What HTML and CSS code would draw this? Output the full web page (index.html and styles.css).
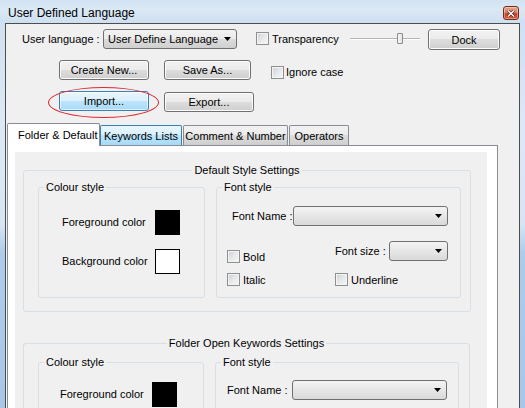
FILE: index.html
```html
<!DOCTYPE html>
<html>
<head>
<meta charset="utf-8">
<link rel="stylesheet" href="styles.css">
</head>
<body>
<div class="window">
  <div class="titlebar">
    <span class="title">User Defined Language</span>
    <div class="close"><svg width="8" height="7" viewBox="0 0 8 7"><path d="M1 0.5L7 6.5M7 0.5L1 6.5" stroke="#4a1a10" stroke-width="2.6"/><path d="M1 0.5L7 6.5M7 0.5L1 6.5" stroke="#fff" stroke-width="1.4"/></svg></div>
  </div>
  <div class="client">
    <div class="row row1">
      <span class="lbl lbl-lang">User language :</span>
      <div class="combo combo-lang"><span class="combo-text">User Define Language</span><svg class="arrow" width="7" height="4" viewBox="0 0 7 4"><path d="M0 0h7L3.5 4z"/></svg></div>
      <span class="check check-trans"></span><span class="lbl lbl-trans">Transparency</span>
      <div class="slider"><div class="thumb"></div></div>
      <div class="btn btn-dock">Dock</div>
    </div>
    <div class="row row2">
      <div class="btn btn-create">Create New...</div>
      <div class="btn btn-save">Save As...</div>
      <span class="check check-ignore"></span><span class="lbl lbl-ignore">Ignore case</span>
    </div>
    <div class="row row3">
      <div class="btn-wrap">
        <div class="btn btn-hover btn-import">Import...</div>
        <div class="ring"></div>
      </div>
      <div class="btn btn-export">Export...</div>
    </div>
    <div class="tabs">
      <div class="tab tab-active t1">Folder &amp; Default</div>
      <div class="tab tab-hover t2">Keywords Lists</div>
      <div class="tab t3">Comment &amp; Number</div>
      <div class="tab t4">Operators</div>
    </div>
    <div class="panel">
      <div class="page">
        <div class="group g1">
          <div class="group-title"><span>Default Style Settings</span></div>
          <div class="cols">
            <div class="sub sub-colour">
              <div class="sub-title"><span>Colour style</span></div>
              <div class="swrow swrow1"><span class="swlbl">Foreground color</span><span class="swatch black"></span></div>
              <div class="swrow swrow2"><span class="swlbl">Background color</span><span class="swatch white"></span></div>
            </div>
            <div class="sub sub-font">
              <div class="sub-title"><span>Font style</span></div>
              <div class="fname"><span class="fname-lbl">Font Name :</span><div class="combo combo-font"><svg class="arrow" width="7" height="4" viewBox="0 0 7 4"><path d="M0 0h7L3.5 4z"/></svg></div></div>
              <div class="frow frow-a">
                <div class="cell-left cell-bottom"><span class="check"></span><span class="clbl">Bold</span></div>
                <div class="cell-right"><span class="fsize-lbl">Font size :</span><div class="combo combo-size"><svg class="arrow" width="7" height="4" viewBox="0 0 7 4"><path d="M0 0h7L3.5 4z"/></svg></div></div>
              </div>
              <div class="frow frow-b">
                <div class="cell-left"><span class="check"></span><span class="clbl">Italic</span></div>
                <div class="cell-right cell-under"><span class="check"></span><span class="clbl">Underline</span></div>
              </div>
            </div>
          </div>
        </div>
        <div class="group g2">
          <div class="group-title"><span>Folder Open Keywords Settings</span></div>
          <div class="cols">
            <div class="sub sub-colour">
              <div class="sub-title"><span>Colour style</span></div>
              <div class="swrow swrow1"><span class="swlbl">Foreground color</span><span class="swatch black"></span></div>
            </div>
            <div class="sub sub-font">
              <div class="sub-title"><span>Font style</span></div>
              <div class="fname"><span class="fname-lbl">Font Name :</span><div class="combo combo-font"><svg class="arrow" width="7" height="4" viewBox="0 0 7 4"><path d="M0 0h7L3.5 4z"/></svg></div></div>
            </div>
          </div>
        </div>
      </div>
    </div>
  </div>
</div>
</body>
</html>
```
FILE: styles.css
```css
* { box-sizing: border-box; }
html, body { margin: 0; padding: 0; }
body {
  width: 525px; height: 408px; overflow: hidden;
  font-family: "Liberation Sans", Arial, sans-serif;
  font-size: 11px; color: #000;
}
.window {
  width: 525px; height: 408px;
  display: flex; flex-direction: column;
  background: linear-gradient(to bottom, #cddff1 0, #dce8f5 30%, #d7e5f3 55%, #aecbea 62%, #a8c7e8 100%);
}
.titlebar {
  height: 23px; flex: none;
  display: flex; align-items: center;
  padding-left: 8px;
  background: linear-gradient(to bottom, #d3e3f3 0, #dbe8f5 40%, #cddff0 100%);
}
.title { font-size: 12px; color: #000; padding-top: 2px; }
.close {
  margin-left: auto; margin-right: 6px; margin-top: 3px;
  width: 16px; height: 14px;
  border: 1px solid #7a2a1c; border-radius: 3px;
  background: linear-gradient(to bottom, #e9a690 0, #d8826a 45%, #c2442a 55%, #d3603c 100%);
  display: flex; align-items: center; justify-content: center;
  box-shadow: inset 0 0 0 1px rgba(255,255,255,0.35);
}
.client {
  flex: 1; margin: 0 5px 0 5px;
  border: 1px solid #4d4d4d; border-bottom: none;
  background: #f0f0f0;
  padding-top: 4px;
  overflow: hidden;
}
.row { display: flex; align-items: center; }
.row1 { height: 21px; }
.lbl { white-space: nowrap; }
.lbl-lang { margin-left: 16px; width: 81px; }
.combo {
  height: 20px; display: flex; align-items: center;
  border: 1px solid #707070; border-radius: 3px;
  background: linear-gradient(to bottom, #f2f2f2 0, #ebebeb 49%, #dddddd 50%, #cfcfcf 100%);
  padding-left: 4px; padding-right: 5px;
}
.combo-text { flex: 1; white-space: nowrap; }
.combo .arrow { margin-left: auto; fill: #000; }
.combo-lang { width: 134px; }
.check {
  display: inline-block; width: 13px; height: 13px; flex: none;
  border: 1px solid #8e8f8f;
  background: linear-gradient(135deg, #cbcfd5 0, #e6e8ea 50%, #f6f6f6 100%);
  box-shadow: inset 0 0 0 1px #f4f4f4;
}
.check-trans { margin-left: 19px; }
.lbl-trans { margin-left: 3px; width: 78px; }
.slider {
  width: 70px; height: 12px; display: flex; align-items: center;
  background:
    linear-gradient(#b5b5b5, #b5b5b5) 0 5px / 100% 1px no-repeat,
    linear-gradient(#ffffff, #ffffff) 0 6px / 100% 1px no-repeat;
}
.thumb {
  margin-left: 47px; width: 6px; height: 11px;
  border: 1px solid #8a8a8a; border-radius: 1px;
  background: linear-gradient(to right, #f7f7f7, #e2e2e2);
}
.btn {
  height: 20px; display: flex; align-items: center; justify-content: center;
  border: 1px solid #707070; border-radius: 3px;
  background: linear-gradient(to bottom, #f2f2f2 0, #ebebeb 49%, #dddddd 50%, #cfcfcf 100%);
  box-shadow: inset 0 0 0 1px #fcfcfc;
  white-space: nowrap;
}
.btn-dock { margin-left: 8px; width: 72px; height: 21px; margin-top: 2px; }
.row2 { margin-top: 11px; }
.btn-create { margin-left: 53px; width: 90px; }
.btn-save { margin-left: 15px; width: 87px; }
.check-ignore { margin-left: 20px; margin-top: 4px; }
.lbl-ignore { margin-left: 2px; margin-top: 4px; }
.row3 { margin-top: 11px; align-items: flex-start; }
.btn-wrap { position: relative; margin-left: 53px; }
.btn-import { width: 90px; }
.btn-hover {
  border-color: #3c7fb1;
  background: linear-gradient(to bottom, #eaf6fd 0, #d9f0fc 49%, #bee6fd 50%, #a7d9f5 100%);
  box-shadow: inset 0 0 0 1px rgba(255,255,255,0.6);
}
.ring {
  position: absolute; left: -11px; top: -4px; width: 111px; height: 31px;
  border: 1px solid #e0282f; border-radius: 50%;
}
.btn-export { margin-left: 15px; width: 90px; margin-top: 1px; }
.tabs {
  display: flex; align-items: flex-end;
  margin-top: 11px; margin-left: 1px; height: 22px;
  position: relative; z-index: 1;
}
.tab {
  height: 20px; display: flex; align-items: center; justify-content: center;
  border: 1px solid #898c95; border-bottom: none;
  border-radius: 2px 2px 0 0;
  background: linear-gradient(to bottom, #f2f2f2 0, #ebebeb 49%, #dddddd 50%, #cfcfcf 100%);
  white-space: nowrap;
}
.tab-active {
  height: 23px; margin-bottom: -1px; background: #fff;
  justify-content: flex-start; padding-left: 10px; padding-bottom: 1px;
}
.tab-hover {
  border-color: #3c7fb1;
  background: linear-gradient(to bottom, #eaf6fd 0, #d9f0fc 49%, #bee6fd 50%, #a7d9f5 100%);
}
.t1 { width: 93px; }
.t2 { width: 82px; }
.t3 { width: 105px; margin-left: 1px; }
.t4 { width: 60px; margin-left: 1px; }
.panel {
  margin-left: 1px; width: 491px; height: 300px;
  border: 1px solid #898c95; border-bottom: none;
  background: #fff;
  padding: 6px 0 0 7px;
}
.page {
  width: 472px; height: 300px; background: #f0f0f0;
  padding-top: 18px;
}
.group {
  margin: 0 16px 0 8px;
  border: 1px solid #d5dfe5; border-radius: 3px;
  padding-bottom: 13px;
}
.g2 { margin-top: 31px; margin-right: 17px; }
.group-title {
  display: flex; justify-content: center;
  margin-top: -7px; height: 13px; line-height: 13px;
}
.group-title span, .sub-title span { background: #f0f0f0; padding: 0 2px; }
.cols { display: flex; gap: 11px; margin: 10px 0 0 14px; }
.g2 .cols { margin-top: 12px; }
.sub {
  border: 1px solid #d5dfe5; border-radius: 3px; height: 111px;
}
.sub-colour { width: 167px; }
.sub-font { width: 245px; }
.g2 .sub-colour { width: 166px; }
.g2 .sub-font { width: 244px; }
.sub-title {
  display: flex; margin-top: -7px; height: 13px; line-height: 13px; padding-left: 5px;
}
.swrow { display: flex; align-items: center; padding-left: 23px; }
.swrow1 { margin-top: 16px; }
.swrow2 { margin-top: 14px; }
.g2 .swrow { padding-left: 21px; }
.g2 .swrow1 { margin-top: 13px; }
.swlbl { width: 93px; white-space: nowrap; padding-bottom: 2px; }
.g2 .swlbl { width: 92px; }
.swatch { width: 25px; height: 25px; border: 1px solid #000; }
.swatch.black { background: #000; }
.swatch.white { background: #fff; }
.fname { display: flex; align-items: center; margin-top: 12px; padding-left: 15px; }
.g2 .fname { margin-top: 11px; padding-left: 11px; }
.fname-lbl { width: 61px; white-space: nowrap; padding-bottom: 1px; }
.g2 .fname-lbl { width: 65px; }
.combo-font {
  width: 155px;
  background: linear-gradient(to bottom, #f4f4f4 0, #e6e6e6 50%, #d9d9d9 100%);
}
.frow { display: flex; padding-left: 10px; }
.frow-a { margin-top: 15px; height: 22px; }
.frow-b { margin-top: 10px; }
.cell-left { width: 108px; display: flex; align-items: center; }
.cell-bottom { align-self: flex-end; }
.cell-right { display: flex; align-items: center; align-self: flex-start; }
.cell-under { align-self: auto; }
.clbl { margin-left: 3px; }
.fsize-lbl { width: 54px; white-space: nowrap; padding-bottom: 1px; }
.combo-size {
  width: 59px;
  background: linear-gradient(to bottom, #f4f4f4 0, #e6e6e6 50%, #d9d9d9 100%);
}
```
